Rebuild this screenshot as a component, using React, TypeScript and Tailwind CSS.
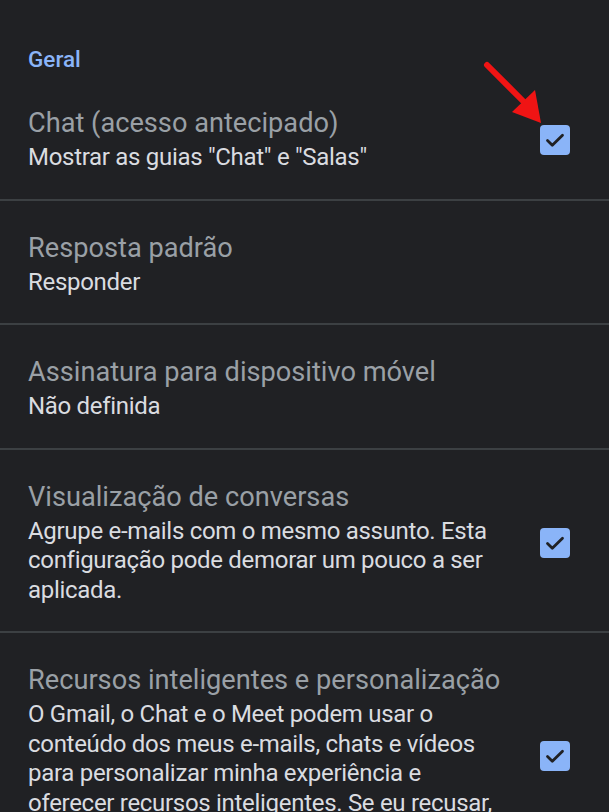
import React from "react";

type Setting = {
  title: string;
  subtitle: string;
  checked?: boolean;
};

const settings: Setting[] = [
  { title: "Chat (acesso antecipado)", subtitle: 'Mostrar as guias "Chat" e "Salas"', checked: true },
  { title: "Resposta padrão", subtitle: "Responder" },
  { title: "Assinatura para dispositivo móvel", subtitle: "Não definida" },
  {
    title: "Visualização de conversas",
    subtitle: "Agrupe e-mails com o mesmo assunto. Esta configuração pode demorar um pouco a ser aplicada.",
    checked: true,
  },
  {
    title: "Recursos inteligentes e personalização",
    subtitle:
      "O Gmail, o Chat e o Meet podem usar o conteúdo dos meus e-mails, chats e vídeos para personalizar minha experiência e oferecer recursos inteligentes. Se eu recusar, esses recursos serão desativados.",
    checked: true,
  },
];

const Checkbox = () => (
  <div className="w-[30px] h-[30px] rounded-[4px] bg-[#8ab4f8] flex items-center justify-center shrink-0">
    <svg width="24" height="24" viewBox="0 0 24 24" fill="none">
      <path d="M4.5 12.5l4.8 4.8L19.5 7.2" stroke="#202124" strokeWidth="2.8" strokeLinecap="round" strokeLinejoin="round" />
    </svg>
  </div>
);

const SettingRow = ({ setting, last }: { setting: Setting; last: boolean }) => (
  <div className={`flex items-center pl-[28px] pr-[39px] pt-[31px] pb-[26px] ${last ? "" : "border-b-2 border-[#3c4043]"}`}>
    <div className="flex-1 min-w-0">
      <p className="text-[27.2px] leading-[32px] text-[#9aa0a6]">{setting.title}</p>
      <p className="mt-[4px] text-[24px] leading-[29.5px] tracking-[-0.3px] text-[#dadce0] w-[480px]">{setting.subtitle}</p>
    </div>
    {setting.checked && <Checkbox />}
  </div>
);

export default function App() {
  return (
    <div className="relative h-[812px] w-[609px] overflow-hidden bg-[#202124]" style={{ fontFamily: "Roboto, 'Noto Sans', sans-serif" }}>
      <div className="h-[76px] pl-[28px] pt-[45px]">
        <p className="text-[22.5px] leading-[28px] font-medium text-[#8ab4f8]">Geral</p>
      </div>
      {settings.map((s, i) => (
        <SettingRow key={s.title} setting={s} last={i === settings.length - 1} />
      ))}

      {/* red annotation arrow */}
      <svg className="absolute left-[480px] top-[58px]" width="70" height="70" viewBox="0 0 70 70">
        <line x1="7" y1="7" x2="46" y2="46" stroke="#f01414" strokeWidth="6" strokeLinecap="round" />
        <polygon points="61,65 32,54 55,32" fill="#f01414" />
      </svg>
    </div>
  );
}
